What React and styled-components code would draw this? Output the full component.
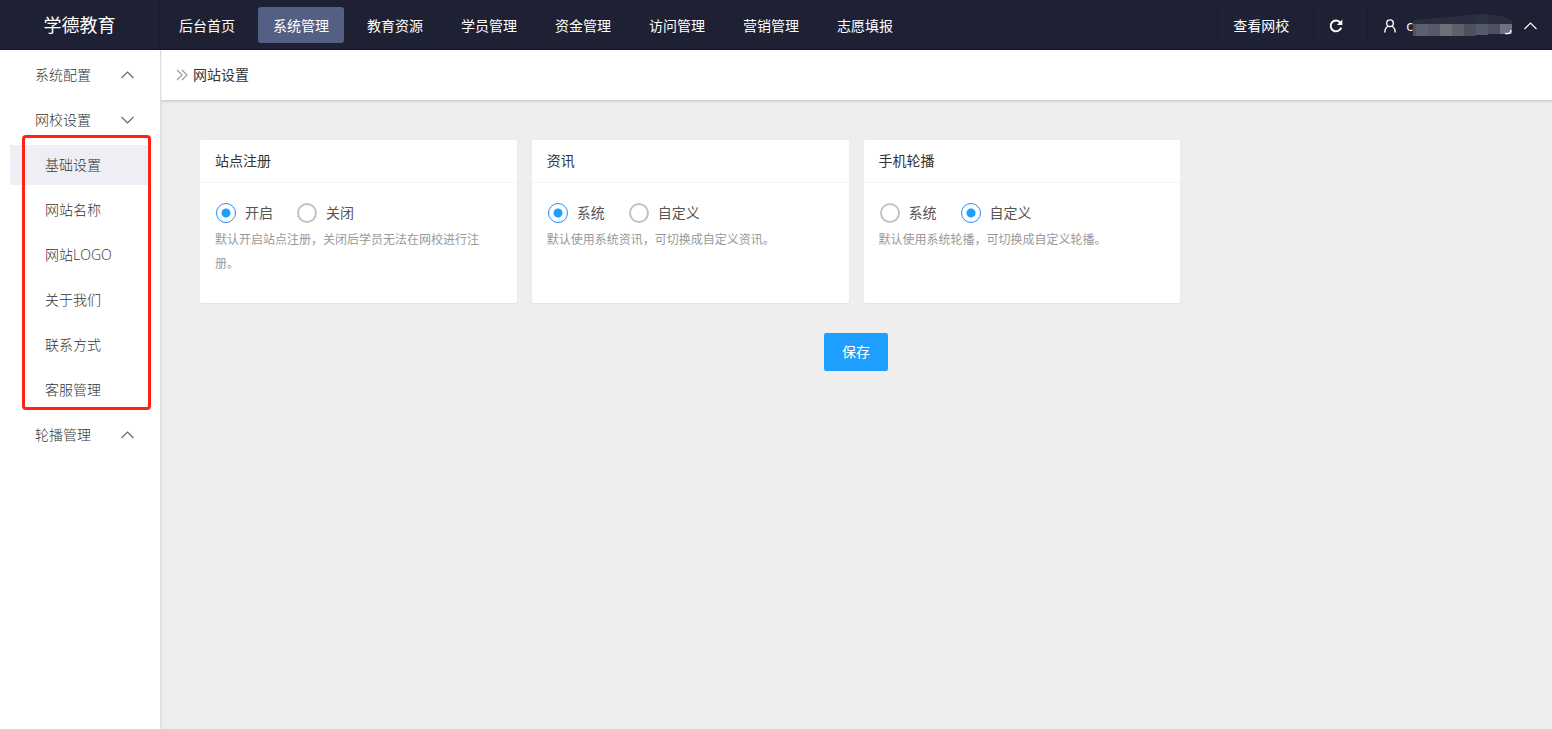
import React, { useState } from "react";
import styled, { createGlobalStyle, css } from "styled-components";

const GlobalStyle = createGlobalStyle`
  *, *::before, *::after { box-sizing: border-box; }
  body {
    margin: 0;
    background: #eeeeee;
    color: #333333;
    font: 14px/24px "Open Sans", "Noto Sans CJK SC", sans-serif;
  }
  a { color: inherit; text-decoration: none; }
  button, input { font: inherit; }
`;

const Page = styled.div`
  display: flex;
  flex-direction: column;
  min-height: 100vh;
`;

const Header = styled.header`
  display: flex;
  align-items: center;
  height: 50px;
  background: #1d2133;
  color: #ffffff;
  box-shadow: inset 0 -1px 0 #191b2a;
`;

const Brand = styled.a`
  width: 160px;
  flex: none;
  font-size: 18px;
  line-height: 50px;
  text-align: center;
  border-right: 1px solid #191d2c;
`;

const Nav = styled.nav`
  display: flex;
  gap: 8px;
  padding: 0 4px;
`;

const NavLink = styled.a`
  height: 36px;
  padding: 0 15px;
  line-height: 38px;
  border-radius: 3px;
  white-space: nowrap;
  background: ${(p) => (p.$active ? "#536083" : "transparent")};
`;

const Tools = styled.div`
  display: flex;
  align-items: center;
  margin-left: auto;
`;

const toolStyle = css`
  display: flex;
  align-items: center;
  height: 34px;
  padding: 2px 15px 0;
  border: 0;
  border-left: 1px solid #181c29;
  background: none;
  color: inherit;
  white-space: nowrap;
`;

const ToolLink = styled.a`
  ${toolStyle}
  padding-right: 24px;
`;

const RefreshButton = styled.button`
  ${toolStyle}
  width: 54px;
`;

const AccountButton = styled.button`
  ${toolStyle}
  padding-left: 16px;
`;

const AccountName = styled.span`
  display: flex;
  align-items: center;
  margin: 0 11px 0 10px;
`;

const Main = styled.div`
  display: flex;
  flex: 1;
`;

const Sidebar = styled.nav`
  position: relative;
  z-index: 1;
  display: flex;
  flex-direction: column;
  gap: 5px;
  flex: none;
  width: 161px;
  padding: 5px 11px 5px 10px;
  background: #ffffff;
  border-right: 1px solid #dddddd;
  box-shadow: 1px 0 2px rgba(0, 0, 0, 0.05);
  font-weight: 300;
`;

const MenuToggle = styled.button`
  display: flex;
  align-items: center;
  justify-content: space-between;
  width: 100%;
  height: 40px;
  padding: 0 15px 0 25px;
  border: 0;
  background: none;
  color: inherit;
  font-weight: inherit;
  svg { color: #666666; }
`;

const SubMenu = styled.div`
  position: relative;
  display: flex;
  flex-direction: column;
  gap: 5px;
`;

const SubLink = styled.a`
  padding-left: 35px;
  line-height: 40px;
  background: ${(p) => (p.$active ? "#eeeff4" : "transparent")};
`;

const Highlight = styled.span`
  position: absolute;
  inset: -10px -2px 0 12px;
  border: 3px solid #ff2316;
  border-radius: 4px;
  pointer-events: none;
`;

const Content = styled.main`
  flex: 1;
  min-width: 0;
`;

const Breadcrumb = styled.div`
  display: flex;
  align-items: center;
  gap: 5px;
  height: 50px;
  padding: 0 15px;
  background: #ffffff;
  box-shadow: 0 1px 3px rgba(0, 0, 0, 0.2);
`;

const SettingsForm = styled.form`
  display: flex;
  flex-direction: column;
  align-items: center;
  gap: 30px;
  padding: 40px 40px 40px 39px;
`;

const Cards = styled.div`
  display: grid;
  grid-template-columns: repeat(4, 1fr);
  gap: 15px;
  width: 100%;
`;

const Card = styled.fieldset`
  min-width: 0;
  margin: 0;
  padding: 0;
  border: 0;
  border-radius: 2px;
  background: #ffffff;
  box-shadow: 0 1px 2px rgba(0, 0, 0, 0.06);
`;

const CardTitle = styled.h2`
  margin: 0;
  padding: 0 15px;
  font-size: 14px;
  font-weight: 400;
  line-height: 42px;
  border-bottom: 1px solid #f4f4f4;
`;

const CardBody = styled.div`
  min-height: 120px;
  padding: 16px 15px 10px;
`;

const RadioRow = styled.div`
  display: flex;
  gap: 23px;
`;

const RadioLabel = styled.label`
  display: flex;
  align-items: center;
  gap: 8px;
  line-height: 28px;
  color: #555555;
`;

const Radio = styled.input`
  appearance: none;
  flex: none;
  width: 20px;
  height: 20px;
  margin: 0 1px;
  border: 2px solid #c2c2c2;
  border-radius: 50%;
  &:checked {
    border: 1px solid #1e8fff;
    background: radial-gradient(circle, #1e9fff 4px, transparent 5px);
  }
`;

const Hint = styled.p`
  margin: 1px 0 0;
  font-size: 12px;
  color: #999999;
`;

const SaveButton = styled.button`
  height: 38px;
  padding: 0 18px;
  border: 0;
  border-radius: 2px;
  background: #1e9fff;
  color: #ffffff;
`;

const Arrow = ({ down }) => (
  <svg width="14" height="8" viewBox="0 0 14 8" fill="none" stroke="currentColor" strokeWidth="1.1" aria-hidden="true">
    <path d={down ? "M1.5 1l6 6 6-6" : "M1.5 7l6-6 6 6"} />
  </svg>
);

const RefreshIcon = () => (
  <svg width="14" height="14" viewBox="0 0 14 14" aria-hidden="true">
    <path d="M11.3 3.6A5.4 5.4 0 1 0 12.2 8.6" fill="none" stroke="currentColor" strokeWidth="1.9" />
    <path d="M13.3 0.6V6H7.9z" fill="currentColor" />
  </svg>
);

const UserIcon = () => (
  <svg width="12" height="14" viewBox="0 0 12 14" fill="none" stroke="currentColor" strokeWidth="1.4" aria-hidden="true">
    <circle cx="6" cy="4.2" r="3.3" />
    <path d="M0.8 13.5C0.8 10 2.4 8 4.3 7M11.2 13.5C11.2 10 9.6 8 7.7 7" />
  </svg>
);

const DoubleChevron = () => (
  <svg width="12" height="12" viewBox="0 0 12 12" fill="none" stroke="#999999" strokeWidth="1.1" aria-hidden="true">
    <path d="M1 1l5 5-5 5M6 1l5 5-5 5" />
  </svg>
);

const blocks = ["#5d606d", "#555968", "#6c7078", "#5c616c", "#504f5e", "#565b6b", "#4e5162", "#70717e"];

const MaskedName = () => (
  <svg width="99" height="24" viewBox="0 0 99 24" aria-hidden="true">
    <path d="M0 6L30 3.5L63 0.5H75L90 2.5L99 7V10H0z" fill="#2a2e3e" />
    <path d="M63 0.5H75V10H63z" fill="#30344a" fillOpacity="0.6" />
    <rect y="10" width="3" height="12" fill="#50535f" />
    {blocks.map((fill, i) => (
      <rect key={i} x={3 + i * 12} y="10" width="12" height={i < 5 ? 12 : i === 5 ? 11 : 10} fill={fill} />
    ))}
    <path d="M92 19.5Q98 20.5 98 16" fill="none" stroke="#ffffff" strokeWidth="1.3" />
  </svg>
);

const navItems = ["后台首页", "系统管理", "教育资源", "学员管理", "资金管理", "访问管理", "营销管理", "志愿填报"];

const menus = [
  { title: "系统配置" },
  { title: "网校设置", items: ["基础设置", "网站名称", "网站LOGO", "关于我们", "联系方式", "客服管理"] },
  { title: "轮播管理" },
];

const settings = [
  { name: "register", title: "站点注册", options: ["开启", "关闭"], value: "开启", hint: "默认开启站点注册，关闭后学员无法在网校进行注册。" },
  { name: "news", title: "资讯", options: ["系统", "自定义"], value: "系统", hint: "默认使用系统资讯，可切换成自定义资讯。" },
  { name: "carousel", title: "手机轮播", options: ["系统", "自定义"], value: "自定义", hint: "默认使用系统轮播，可切换成自定义轮播。" },
];

function SettingCard({ name, title, options, value, hint }) {
  const [selected, setSelected] = useState(value);
  return (
    <Card aria-label={title}>
      <CardTitle>{title}</CardTitle>
      <CardBody>
        <RadioRow>
          {options.map((option) => (
            <RadioLabel key={option}>
              <Radio type="radio" name={name} checked={selected === option} onChange={() => setSelected(option)} />
              {option}
            </RadioLabel>
          ))}
        </RadioRow>
        <Hint>{hint}</Hint>
      </CardBody>
    </Card>
  );
}

export default function App() {
  return (
    <Page>
      <GlobalStyle />
      <Header>
        <Brand href="#">学德教育</Brand>
        <Nav>
          {navItems.map((item) => (
            <NavLink key={item} href="#" $active={item === "系统管理"}>{item}</NavLink>
          ))}
        </Nav>
        <Tools>
          <ToolLink href="#">查看网校</ToolLink>
          <RefreshButton type="button" aria-label="刷新"><RefreshIcon /></RefreshButton>
          <AccountButton type="button">
            <UserIcon />
            <AccountName>c<MaskedName /></AccountName>
            <Arrow />
          </AccountButton>
        </Tools>
      </Header>
      <Main>
        <Sidebar>
          {menus.map(({ title, items }) => (
            <React.Fragment key={title}>
              <MenuToggle type="button" aria-expanded={Boolean(items)}>
                {title}
                <Arrow down={Boolean(items)} />
              </MenuToggle>
              {items && (
                <SubMenu>
                  {items.map((item) => (
                    <SubLink key={item} href="#" $active={item === "基础设置"}>{item}</SubLink>
                  ))}
                  <Highlight />
                </SubMenu>
              )}
            </React.Fragment>
          ))}
        </Sidebar>
        <Content>
          <Breadcrumb><DoubleChevron />网站设置</Breadcrumb>
          <SettingsForm onSubmit={(e) => e.preventDefault()}>
            <Cards>
              {settings.map((s) => <SettingCard key={s.name} {...s} />)}
            </Cards>
            <SaveButton type="submit">保存</SaveButton>
          </SettingsForm>
        </Content>
      </Main>
    </Page>
  );
}
